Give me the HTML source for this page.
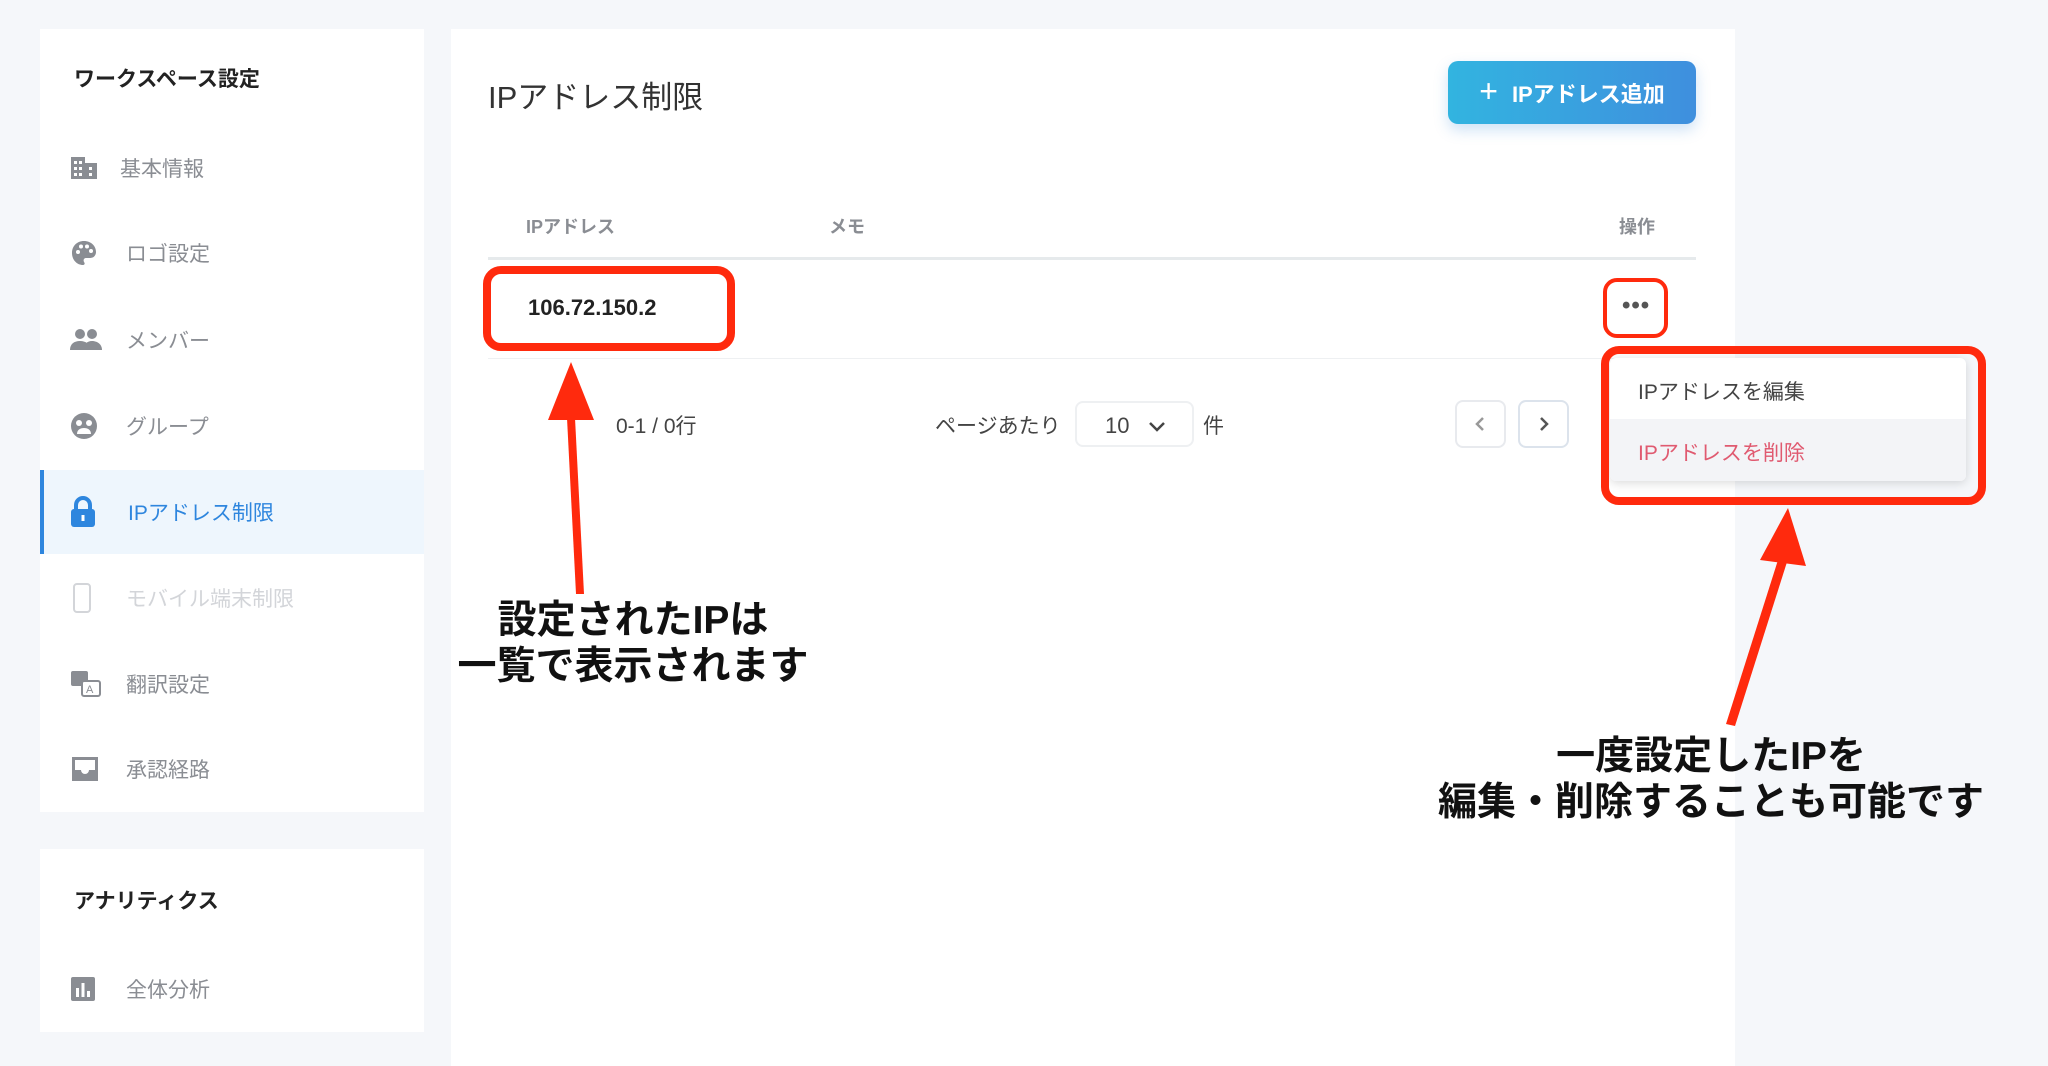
<!DOCTYPE html>
<html><head><meta charset="utf-8"><style>
*{margin:0;padding:0;box-sizing:border-box}
body{width:2048px;height:1066px;background:#f5f7fa;position:relative;overflow:hidden;font-family:"Liberation Sans","Noto Sans CJK JP",sans-serif;color:#333}
.a{position:absolute;white-space:nowrap}
.card{position:absolute;background:#fff}
.si{position:absolute;left:0;width:384px;height:84px;display:flex;align-items:center;font-size:21px;color:#8a8d93}
.si svg{position:absolute;left:30px}
.si span{position:absolute;left:80px}
.red{position:absolute;border:8px solid #ff2a0d;border-radius:18px}
.ann{position:absolute;font-weight:bold;font-size:39px;color:#111;text-align:center;line-height:46px;white-space:nowrap}
</style></head><body>
<div class="card" style="left:40px;top:29px;width:384px;height:783px">
 <div class="a" style="left:34px;top:34px;font-size:21px;font-weight:bold;color:#222">ワークスペース設定</div>
 <div class="si" style="top:97px"><svg width="28" height="26" viewBox="0 0 28 26"><rect x="1" y="2" width="14" height="22" fill="#8a8d93"/><rect x="15" y="8" width="12" height="16" fill="#8a8d93"/><g fill="#fff"><rect x="4" y="6" width="3" height="3"/><rect x="9" y="6" width="3" height="3"/><rect x="4" y="12" width="3" height="3"/><rect x="9" y="12" width="3" height="3"/><rect x="4" y="18" width="3" height="3"/><rect x="9" y="18" width="3" height="3"/><rect x="19" y="12" width="3" height="3"/><rect x="19" y="18" width="3" height="3"/></g></svg><span>基本情報</span></div>
 <div class="si" style="top:182px"><svg width="28" height="28" viewBox="0 0 28 28"><path d="M14 2C7 2 2 7 2 14s5 12 11 12c2 0 2-2 1-3-1-2 0-4 2-4h4c4 0 6-3 6-6C26 7 21 2 14 2z" fill="#8a8d93"/><g fill="#fff"><circle cx="8" cy="13" r="2"/><circle cx="11" cy="7.5" r="2"/><circle cx="17" cy="7.5" r="2"/><circle cx="21" cy="12" r="2"/></g></svg><span style="left:86px">ロゴ設定</span></div>
 <div class="si" style="top:269px"><svg width="32" height="24" viewBox="0 0 32 24"><g fill="#8a8d93"><circle cx="10" cy="6" r="5"/><circle cx="22" cy="6" r="5"/><path d="M0 22c0-6 4-9 10-9s10 3 10 9z"/><path d="M14 22c0-6 3-9 8-9s10 3 10 9z"/></g></svg><span style="left:86px">メンバー</span></div>
 <div class="si" style="top:355px"><svg width="28" height="28" viewBox="0 0 28 28"><circle cx="14" cy="14" r="13" fill="#8a8d93"/><g fill="#fff"><circle cx="9" cy="11" r="3"/><circle cx="19" cy="11" r="3"/><path d="M7 22c0-4 3-6 7-6s7 2 7 6z"/></g></svg><span style="left:86px">グループ</span></div>
 <div class="si" style="top:441px;background:#eef6fd;border-left:4px solid #2e86de;color:#2e86de"><svg width="26" height="32" viewBox="0 0 26 32" style="left:26px"><path d="M6 14V9a7 7 0 0 1 14 0v5" stroke="#2e86de" stroke-width="4" fill="none"/><rect x="1" y="13" width="24" height="18" rx="3" fill="#2e86de"/><rect x="11.5" y="19" width="3" height="6" fill="#fff"/></svg><span style="left:84px">IPアドレス制限</span></div>
 <div class="si" style="top:527px;color:#d3d5d9"><svg width="20" height="30" viewBox="0 0 20 30" style="left:32px"><rect x="2" y="1" width="16" height="28" rx="3" stroke="#d3d5d9" stroke-width="2" fill="none"/></svg><span style="left:86px">モバイル端末制限</span></div>
 <div class="si" style="top:613px"><svg width="32" height="28" viewBox="0 0 32 28"><rect x="1" y="1" width="17" height="15" rx="2" fill="#8a8d93"/><rect x="12" y="11" width="18" height="15" rx="2" fill="#fff" stroke="#8a8d93" stroke-width="2"/><text x="16" y="23" font-size="11" fill="#8a8d93" font-family="Liberation Sans">A</text></svg><span style="left:86px">翻訳設定</span></div>
 <div class="si" style="top:698px"><svg width="30" height="28" viewBox="0 0 30 28"><path d="M2 2h26v24H2z" fill="#8a8d93"/><path d="M5 5h20v10h-6a4 4 0 0 1-8 0H5z" fill="#fff"/></svg><span style="left:86px">承認経路</span></div>
</div>
<div class="card" style="left:40px;top:849px;width:384px;height:183px">
 <div class="a" style="left:34px;top:36px;font-size:21px;font-weight:bold;color:#222">アナリティクス</div>
 <div class="si" style="top:98px"><svg width="26" height="26" viewBox="0 0 26 26"><rect x="1" y="1" width="24" height="24" rx="2" fill="#8a8d93"/><g fill="#fff"><rect x="6" y="12" width="3" height="9"/><rect x="11.5" y="7" width="3" height="14"/><rect x="17" y="15" width="3" height="6"/></g></svg><span style="left:86px">全体分析</span></div>
</div>
<div class="card" style="left:451px;top:29px;width:1284px;height:1037px"></div>
<div class="a" style="left:488px;top:72px;font-size:31px;color:#333">IPアドレス制限</div>
<div class="a" style="left:1448px;top:61px;width:248px;height:63px;border-radius:10px;background:linear-gradient(90deg,#32b4e0,#3f8fde);box-shadow:0 6px 14px rgba(60,140,220,.25);color:#fff;font-size:22px;font-weight:bold;display:flex;align-items:center;justify-content:center"><span style="font-size:32px;font-weight:normal;margin-right:14px;margin-top:-3px">+</span>IPアドレス追加</div>
<div class="a" style="left:526px;top:213px;font-size:18px;color:#8a8d93;font-weight:bold">IPアドレス</div>
<div class="a" style="left:829px;top:213px;font-size:18px;color:#8a8d93;font-weight:bold">メモ</div>
<div class="a" style="left:1619px;top:213px;font-size:18px;color:#8a8d93;font-weight:bold">操作</div>
<div class="a" style="left:488px;top:257px;width:1208px;height:3px;background:#e6eaec"></div>
<div class="a" style="left:488px;top:358px;width:1208px;height:1px;background:#eef0f2"></div>
<div class="a" style="left:528px;top:295px;font-size:22px;font-weight:bold;color:#222">106.72.150.2</div>
<div class="red" style="left:483px;top:266px;width:252px;height:85px"></div>
<div class="a" style="left:1622px;top:292px;font-size:24px;color:#555;letter-spacing:1px;font-weight:bold">•••</div>
<div class="a" style="left:1603px;top:278px;width:65px;height:60px;border:4px solid #ff2a0d;border-radius:14px"></div>
<div class="a" style="left:616px;top:410px;font-size:21px;color:#444">0-1 / 0行</div>
<div class="a" style="left:935px;top:410px;font-size:21px;color:#444">ページあたり</div>
<div class="a" style="left:1075px;top:401px;width:119px;height:46px;border:2px solid #eef0f2;border-radius:8px;font-size:22px;color:#444;padding:10px 0 0 28px">10 <svg width="18" height="12" viewBox="0 0 18 12" style="margin-left:12px"><path d="M2 2l7 7 7-7" stroke="#444" stroke-width="2.5" fill="none"/></svg></div>
<div class="a" style="left:1203px;top:410px;font-size:21px;color:#444">件</div>
<div class="a" style="left:1455px;top:400px;width:51px;height:48px;border:2px solid #e8eaee;border-radius:8px"><svg width="47" height="44" viewBox="0 0 47 44"><path d="M26 16l-6 6 6 6" stroke="#999" stroke-width="2.5" fill="none"/></svg></div>
<div class="a" style="left:1518px;top:400px;width:51px;height:48px;border:2px solid #dce3ec;border-radius:8px"><svg width="47" height="44" viewBox="0 0 47 44"><path d="M21 16l6 6-6 6" stroke="#555" stroke-width="2.5" fill="none"/></svg></div>
<div class="a" style="left:1610px;top:358px;width:356px;height:123px;background:#fff;box-shadow:0 2px 10px rgba(0,0,0,.15);border-radius:6px;overflow:hidden">
 <div style="height:61px;padding:18px 0 0 28px;font-size:21px;color:#444">IPアドレスを編集</div>
 <div style="height:62px;background:#f3f4f7;padding:18px 0 0 28px;font-size:21px;color:#e05a70">IPアドレスを削除</div>
</div>
<div class="red" style="left:1601px;top:346px;width:385px;height:159px;border-width:8px"></div>
<svg class="a" style="left:0;top:0" width="2048" height="1066"><g fill="#ff2a0d"><polygon points="571,362 548,420 594,420"/><polygon points="567,418 575,418 584,594 576,594"/><polygon points="1788,508 1760,560 1806,566"/><polygon points="1778,560 1787,562 1735,726 1726,724"/></g></svg>
<div class="ann" style="left:433px;top:598px;width:400px">設定されたIPは<br>一覧で表示されます</div>
<div class="ann" style="left:1411px;top:734px;width:600px">一度設定したIPを<br>編集・削除することも可能です</div>
</body></html>
